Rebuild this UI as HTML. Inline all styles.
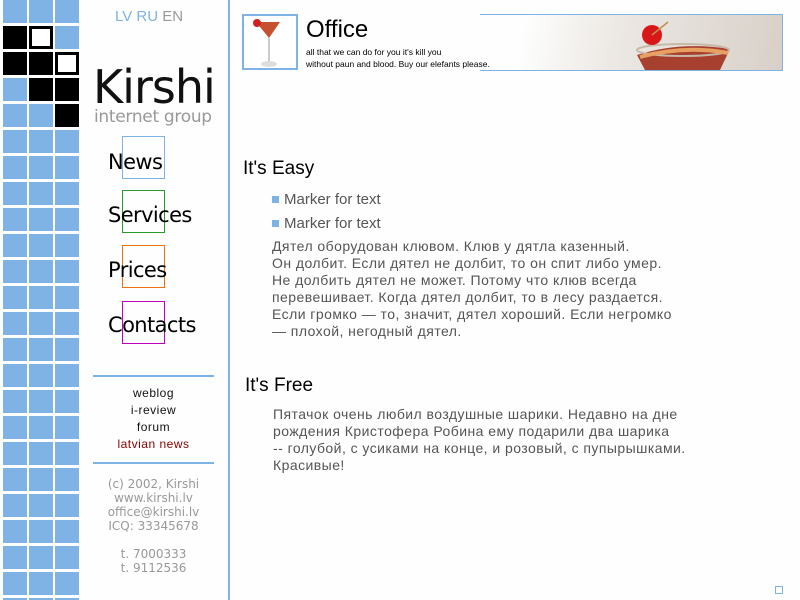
<!DOCTYPE html>
<html style="height:600px;overflow:hidden"><head><meta charset="utf-8"><style>
body{margin:0;width:800px;height:600px;background:#fdfefd;position:relative;overflow:hidden;font-family:"Liberation Sans",sans-serif}
.a{position:absolute}
.c{position:absolute;width:24px;height:23px;background:#7fb2e5}
.nav{position:absolute;left:108px;font-size:21px;color:#000;font-family:"DejaVu Sans",sans-serif;letter-spacing:-0.6px}
.bx{position:absolute;left:122px;width:41px;height:41px;border:1px solid}
.ml{position:absolute;left:93px;width:121px;text-align:center;font-size:12px;line-height:17px;letter-spacing:0.5px}
.ft{position:absolute;left:93px;width:121px;text-align:center;font-size:12px;line-height:14px;color:#999;font-family:"DejaVu Sans",sans-serif}
p.t{position:absolute;margin:0;font-size:14px;line-height:17px;color:#555;letter-spacing:0.45px}
</style></head><body>
<div id="grid"></div>
<script>
var g=document.getElementById('grid'),h='';
var blk={'1,0':'b','1,1':'w','2,0':'b','2,1':'b','2,2':'w','3,1':'b','3,2':'b','4,2':'b'};
for(var r=0;r<24;r++)for(var c=0;c<3;c++){var k=blk[r+','+c];var st='left:'+(3+c*26)+'px;top:'+(r*26)+'px;';
if(k=='b')st+='background:#000;';else if(k=='w')st+='background:#fff;border:3px solid #000;width:18px;height:17px;';
h+='<div class="c" style="'+st+'"></div>';}
g.innerHTML=h;
</script>
<div class="a" style="left:228px;top:0;width:2px;height:600px;background:#7fb2e5"></div>
<div class="a" style="left:115px;top:8px;font-size:15px;color:#7fb2e5">LV RU <span style="color:#999">EN</span></div>
<div class="a" style="left:93px;top:64px;font-size:46px;line-height:46px;font-family:'DejaVu Sans',sans-serif;letter-spacing:-1px;color:#111">Kirshi</div>
<div class="a" style="left:94px;top:108px;font-size:17px;line-height:18px;color:#999;font-family:'DejaVu Sans',sans-serif;letter-spacing:-0.3px">internet group</div>
<div class="bx" style="top:136px;border-color:#7fb2e5"></div>
<div class="bx" style="top:190px;border-color:#2a9a2a"></div>
<div class="bx" style="top:245px;border-color:#f07010"></div>
<div class="bx" style="top:301px;border-color:#c000c0"></div>
<div class="nav" style="top:150px">News</div>
<div class="nav" style="top:203px">Services</div>
<div class="nav" style="top:258px">Prices</div>
<div class="nav" style="top:313px">Contacts</div>
<div class="a" style="left:93px;top:375px;width:121px;height:2px;background:#7fb2e5"></div>
<div class="ml" style="top:385px;color:#111">weblog<br>i-review<br>forum<br><span style="color:#800">latvian news</span></div>
<div class="a" style="left:93px;top:462px;width:121px;height:2px;background:#7fb2e5"></div>
<div class="ft" style="top:477px">(c) 2002, Kirshi<br>www.kirshi.lv<br>office@kirshi.lv<br>ICQ: 33345678<br><br>t. 7000333<br>t. 9112536</div>
<div class="a" style="left:242px;top:14px;width:52px;height:52px;border:2px solid #7fb2e5;background:#fff">
<svg width="52" height="52"><path d="M12 6 L36 6 L25 22 Z" fill="#c65030"/><circle cx="13" cy="7" r="4" fill="#d02020"/><line x1="25" y1="22" x2="25" y2="46" stroke="#ccc" stroke-width="2"/><ellipse cx="25" cy="48" rx="8" ry="3" fill="#ddd"/></svg></div>
<div class="a" style="left:480px;top:14px;width:302px;height:55px;border:1px solid #7fb2e5;border-left:none;background:linear-gradient(100deg,#fdfefd 0%,#fdfefd 15%,#ece8e4 45%,#d8d0c8 100%);overflow:hidden">
<svg width="302" height="55" style="position:absolute;left:0;top:0"><path d="M157 40 Q200 26 250 34 L240 55 L165 55 Z" fill="#a84030"/><ellipse cx="203" cy="35" rx="46" ry="6" fill="none" stroke="#c8b8a8" stroke-width="2"/><path d="M160 42 Q205 30 248 38" stroke="#e8a060" stroke-width="4" fill="none"/><circle cx="172" cy="20" r="10" fill="#d81818"/><line x1="172" y1="20" x2="188" y2="7" stroke="#c09050" stroke-width="1.5"/></svg></div>
<div class="a" style="left:306px;top:16px;font-size:24px;color:#000;z-index:2">Office</div>
<div class="a" style="left:306px;top:46px;font-size:8.5px;line-height:12px;color:#000;z-index:2">all that we can do for you it's kill you<br>without paun and blood. Buy our elefants please.</div>
<div class="a" style="left:243px;top:158px;font-size:19px;color:#000">It's Easy</div>
<div class="a" style="left:272px;top:196px;width:7px;height:7px;background:#7fb2e5"></div>
<div class="a" style="left:284px;top:191px;font-size:15px;color:#555">Marker for text</div>
<div class="a" style="left:272px;top:220px;width:7px;height:7px;background:#7fb2e5"></div>
<div class="a" style="left:284px;top:215px;font-size:15px;color:#555">Marker for text</div>
<p class="t" style="left:272px;top:238px">Дятел оборудован клювом. Клюв у дятла казенный.<br>Он долбит. Если дятел не долбит, то он спит либо умер.<br>Не долбить дятел не может. Потому что клюв всегда<br>перевешивает. Когда дятел долбит, то в лесу раздается.<br>Если громко — то, значит, дятел хороший. Если негромко<br>— плохой, негодный дятел.</p>
<div class="a" style="left:245px;top:375px;font-size:19px;color:#000">It's Free</div>
<p class="t" style="left:273px;top:406px">Пятачок очень любил воздушные шарики. Недавно на дне<br>рождения Кристофера Робина ему подарили два шарика<br>-- голубой, с усиками на конце, и розовый, с пупырышками.<br>Красивые!</p>
<div class="a" style="left:775px;top:586px;width:6px;height:6px;border:1px solid #7fb2e5"></div>
</body></html>
